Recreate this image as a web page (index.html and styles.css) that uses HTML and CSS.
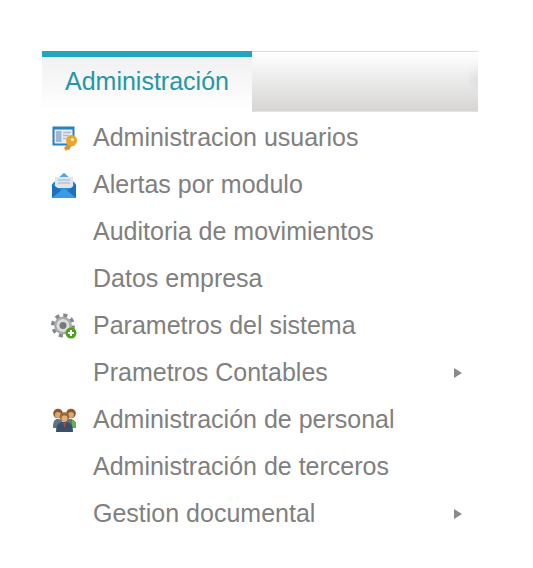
FILE: index.html
```html
<!DOCTYPE html>
<html lang="en">
<head>
  <meta charset="UTF-8">
  <title>Administración</title>
  <link rel="stylesheet" href="styles.css">
</head>
<body>
  <nav class="menu">
    <div class="tab-bar">
      <div class="tab">Administración</div>
      <div class="tab-rest"></div>
    </div>
    <ul class="item-list">
      <li class="item">
        <svg class="icon" viewBox="0 0 26 26">
          <rect x="1.500" y="1.500" width="22" height="19" fill="#2a7fc0"/>
          <rect x="3.500" y="4.500" width="18" height="14" fill="#e6eef6"/>
          <rect x="5" y="6" width="5.500" height="11" fill="#9db8d6"/>
          <path d="M12 7.500h8M12 10.500h6M12 13.500h3" stroke="#a9bdd2" stroke-width="1.500"/>
          <path d="M18 17l-5 6 2 3 1.500-1.500 1.500 .5 4-6z" fill="#d9962a"/>
          <circle cx="20.500" cy="15.500" r="5.500" fill="#eaa52c"/>
          <circle cx="21.500" cy="14.500" r="1.600" fill="#fff0c8"/>
        </svg>
        <span class="label">Administracion usuarios</span>
      </li>
      <li class="item">
        <svg class="icon" viewBox="0 0 26 26">
          <path d="M1 12 13 1l12 11v14H1z" fill="#2b8ad6"/>
          <path d="M4 5h18v11H4z" fill="#dfe6ee"/>
          <path d="M13 1 8.500 5h9z" fill="#5aa7e6"/>
          <path d="M7 8h12M7 11h12" stroke="#b5c3d2" stroke-width="1.500"/>
          <path d="M1 12l10 7-10 7zM25 12l-9 7 9 7z" fill="#1c70bd"/>
          <path d="M1 26l12-10 12 10z" fill="#3a9be4"/>
        </svg>
        <span class="label">Alertas por modulo</span>
      </li>
      <li class="item item-plain"><span class="label">Auditoria de movimientos</span></li>
      <li class="item item-plain"><span class="label">Datos empresa</span></li>
      <li class="item">
        <svg class="icon" viewBox="0 0 26 26">
          <circle cx="12" cy="12.500" r="10" fill="none" stroke="#85888a" stroke-width="4" stroke-dasharray="4 3.850"/>
          <circle cx="12" cy="12.500" r="9" fill="#a9abac"/>
          <circle cx="12" cy="12.500" r="6.500" fill="#dcdddd"/>
          <circle cx="12" cy="12.500" r="3.500" fill="#77797b"/>
          <circle cx="20" cy="20" r="5.500" fill="#4f9e1c"/>
          <path d="M20 17v6M17 20h6" stroke="#fff" stroke-width="2"/>
        </svg>
        <span class="label">Parametros del sistema</span>
      </li>
      <li class="item item-plain">
        <span class="label">Prametros Contables</span>
        <span class="arrow"></span>
      </li>
      <li class="item">
        <svg class="icon" viewBox="0 0 26 26">
          <path d="M2 21c0-7 1.500-9 5-9s5 2 5 9zM14 21c0-7 1.500-9 5-9s6 2 6 9z" fill="#5f7486"/>
          <path d="M21 13l4 2v6h-4z" fill="#6cae4a"/>
          <circle cx="7" cy="6.500" r="4.800" fill="#8a5a2c"/>
          <circle cx="20" cy="6.500" r="4.800" fill="#8a5a2c"/>
          <circle cx="7" cy="8" r="3" fill="#d8a878"/>
          <circle cx="20" cy="8" r="3" fill="#d8a878"/>
          <circle cx="13.500" cy="10" r="4.800" fill="#9c6a36"/>
          <circle cx="13.500" cy="11.500" r="3" fill="#e0b084"/>
          <path d="M5 25c0-8 3-10 8.500-10s8.500 2 8.500 10z" fill="#36516b"/>
          <path d="M12 15.500h3L13.500 21z" fill="#d0432f"/>
        </svg>
        <span class="label">Administración de personal</span>
      </li>
      <li class="item item-plain"><span class="label">Administración de terceros</span></li>
      <li class="item item-plain">
        <span class="label">Gestion documental</span>
        <span class="arrow"></span>
      </li>
    </ul>
  </nav>
</body>
</html>
```

FILE: styles.css
```css
body {
  margin: 0;
  background-color: #fff;
  font-family: "Liberation Sans", Arial, sans-serif;
}

.menu {
  width: 436px;
  margin: 51px 0 0 42px;
}

.tab-bar {
  display: flex;
  height: 61px;
}

.tab {
  width: 210px;
  box-sizing: border-box;
  padding: 10px 0 0 23px;
  border-top: 6px solid #22a6bf;
  background: linear-gradient(#f1f1f1, #ffffff);
  color: #2596ab;
  font-size: 25px;
  line-height: 29px;
}

.tab-rest {
  flex: 1;
  border-top: 1px solid #dcdcdc;
  border-bottom: 1px solid #e2e2e2;
  background:
    radial-gradient(ellipse 12px 14px at 100% 45%, rgba(190, 190, 190, 0.25), rgba(190, 190, 190, 0)),
    linear-gradient(#ffffff, #d6d5d4);
}

.item-list {
  list-style: none;
  margin: 0;
  padding: 2px 0 0 0;
}

.item {
  display: flex;
  align-items: center;
  height: 47px;
  padding-left: 9px;
  color: #808080;
  font-size: 25px;
}

.icon {
  width: 26px;
  height: 26px;
  margin-right: 16px;
}

.item-plain .label {
  margin-left: 42px;
}

.arrow {
  width: 0;
  height: 0;
  margin-left: auto;
  margin-right: 16px;
  border-left: 8px solid #8a8a8a;
  border-top: 5px solid transparent;
  border-bottom: 5px solid transparent;
}
```
